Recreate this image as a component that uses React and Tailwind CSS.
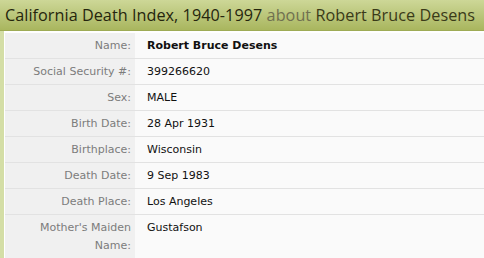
const rows = [
  { label: "Name:", value: "Robert Bruce Desens", bold: true },
  { label: "Social Security #:", value: "399266620" },
  { label: "Sex:", value: "MALE" },
  { label: "Birth Date:", value: "28 Apr 1931" },
  { label: "Birthplace:", value: "Wisconsin" },
  { label: "Death Date:", value: "9 Sep 1983" },
  { label: "Death Place:", value: "Los Angeles" },
  { label: "Mother's Maiden Name:", value: "Gustafson" },
];

export default function App() {
  return (
    <div className="w-[484px] h-[258px] overflow-hidden bg-white">
      <div className="h-[31px] px-[5px] flex items-center bg-gradient-to-b from-[#cdd797] to-[#a9b65e] border-b border-[#9eab55]">
        <h1 className="text-[16.2px] leading-none text-[#25250d] whitespace-nowrap font-['Open_Sans',sans-serif] tracking-[0.05px]">
          California Death Index, 1940-1997{" "}
          <span className="text-[#707050]">about</span>{" "}
          <span className="text-[#3a3a18]">Robert Bruce Desens</span>
        </h1>
      </div>

      <div className="flex border-l-[4px] border-[#d4dea6] pt-[2px]">
        <div className="flex-1 pl-[1px]">
          {rows.map((r) => (
            <div
              key={r.label}
              className="flex border-b border-[#e2e2e2] font-['DejaVu_Sans',sans-serif] text-[11px] leading-[18px]"
            >
              <div className="w-[130px] shrink-0 bg-[#f0f0f0] text-right text-[#7c7c7c] pl-[16px] pr-[4px] py-[3.5px]">
                {r.label}
              </div>
              <div
                className={
                  "flex-1 bg-[#fafafa] pl-[12px] py-[3.5px] text-[#111]" +
                  (r.bold ? " font-bold" : "")
                }
              >
                {r.value}
              </div>
            </div>
          ))}
        </div>
      </div>
    </div>
  );
}
